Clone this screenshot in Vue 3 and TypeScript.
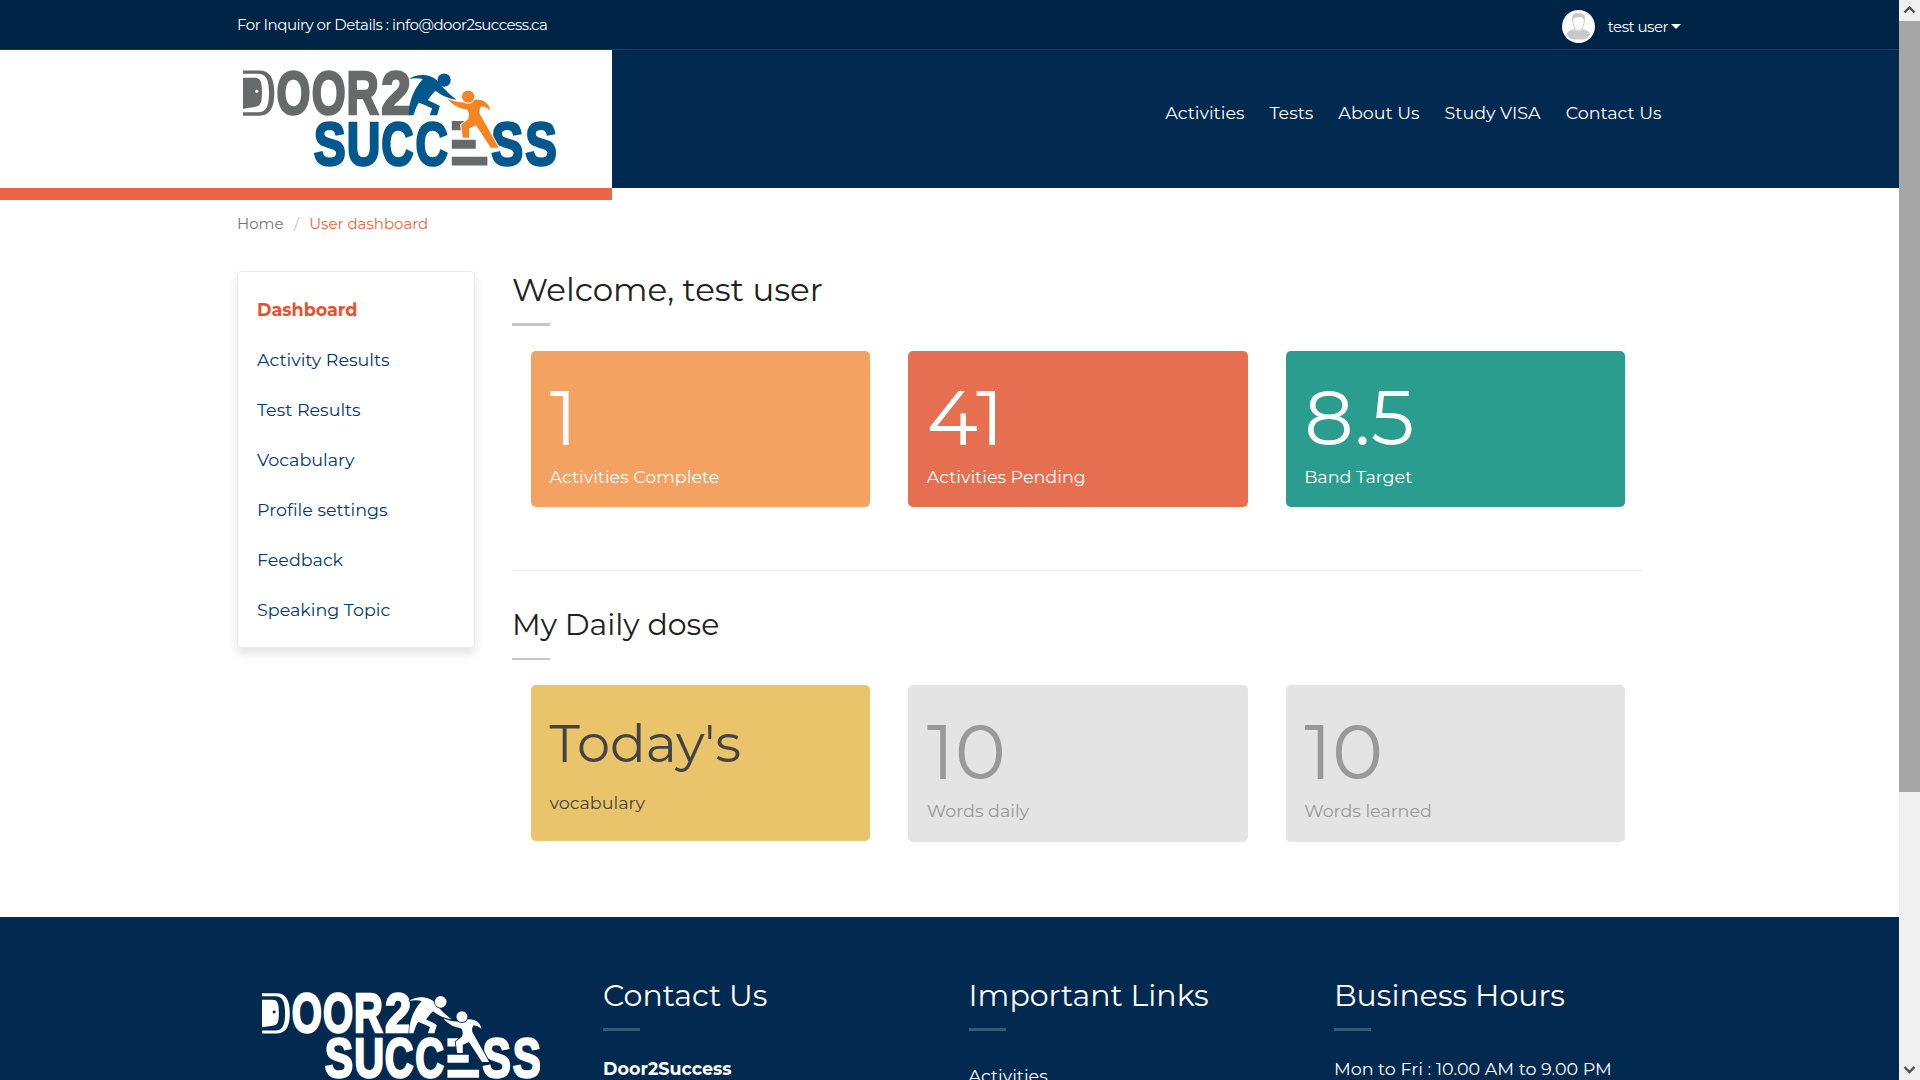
<script setup lang="ts">
import { h, type VNode } from 'vue'

interface Glyph { ch: string; left: number; right: number; base: number; tone: string }
interface Card { value: string; label: string; tone: string; word?: boolean }

const nav: string[] = ['Activities', 'Tests', 'About Us', 'Study VISA', 'Contact Us']
const menu: string[] = ['Dashboard', 'Activity Results', 'Test Results', 'Vocabulary', 'Profile settings', 'Feedback', 'Speaking Topic']
const progress: Card[] = [
  { value: '1', label: 'Activities Complete', tone: 'orange' },
  { value: '41', label: 'Activities Pending', tone: 'red' },
  { value: '8.5', label: 'Band Target', tone: 'teal' },
]
const daily: Card[] = [
  { value: "Today's", label: 'vocabulary', tone: 'yellow', word: true },
  { value: '10', label: 'Words daily', tone: 'grey' },
  { value: '10', label: 'Words learned', tone: 'grey' },
]

// Advance, left bearing and ink width per em of the bold logo letters
const metrics: Record<string, [number, number, number]> = {
  O: [0.778, 0.041, 0.695],
  R: [0.722, 0.067, 0.64],
  '2': [0.556, 0.034, 0.475],
  S: [0.667, 0.031, 0.59],
  U: [0.722, 0.06, 0.6],
  C: [0.722, 0.045, 0.64],
}
const weight = 8
const glyphs: Glyph[] = [
  { ch: 'O', left: 171, right: 270, base: 343, tone: 'steel' },
  { ch: 'O', left: 277, right: 376, base: 343, tone: 'steel' },
  { ch: 'R', left: 385, right: 479, base: 343, tone: 'steel' },
  { ch: '2', left: 486, right: 570, base: 343, tone: 'steel' },
  { ch: 'S', left: 282, right: 375, base: 495, tone: 'blue' },
  { ch: 'U', left: 385, right: 477, base: 495, tone: 'blue' },
  { ch: 'C', left: 486, right: 580, base: 495, tone: 'blue' },
  { ch: 'C', left: 589, right: 683, base: 495, tone: 'blue' },
  { ch: 'S', left: 815, right: 908, base: 495, tone: 'blue' },
  { ch: 'S', left: 917, right: 1009, base: 495, tone: 'blue' },
]

// Shared by the header and the footer; colours come from custom properties
const Logo = (): VNode =>
  h('svg', { viewBox: '69 208 940 297', style: 'display:block;width:100%;height:100%' }, [
    h('path', {
      fill: 'var(--steel)',
      d: 'M69 212H118C150 212 163 236 163 280S150 348 118 348H69V338H114C138 338 147 320 147 280S138 222 114 222H69ZM69 234H104C121 234 126 244 126 278S121 320 104 322L69 327Z',
    }),
    h('circle', { cx: 110, cy: 275, r: 5, fill: 'var(--bg)' }),
    ...glyphs.map((g) => {
      const [adv, bearing, ink] = metrics[g.ch]
      const k = (g.right - g.left - weight) / ink
      return h('text', {
        x: g.left + weight / 2 - bearing * k,
        y: g.base,
        textLength: adv * k,
        lengthAdjust: 'spacingAndGlyphs',
        'font-size': 185,
        'font-family': 'Liberation Sans, Arial, sans-serif',
        'font-weight': 700,
        fill: `var(--${g.tone})`,
        stroke: `var(--${g.tone})`,
        'stroke-width': weight,
      }, g.ch)
    }),
    h('path', { fill: 'var(--steel)', d: 'M696 364H745V392H696ZM696 420H768V447H696ZM696 471H803V498H696Z' }),
    h('g', { fill: 'var(--blue)', stroke: 'var(--bg)', 'stroke-width': 'var(--edge)', 'paint-order': 'stroke' }, [
      h('path', { d: 'M566 238C592 221 634 219 657 248C674 270 691 286 710 300C689 300 667 288 647 273C638 282 630 292 624 301C638 308 652 313 660 320L652 347H630L637 326C622 319 606 312 597 309C589 319 586 334 581 347H567C566 305 583 266 609 238C594 234 580 235 566 238Z' }),
      h('circle', { cx: 673, cy: 241, r: 20 }),
    ]),
    h('g', { fill: 'var(--orange)', stroke: 'var(--bg)', 'stroke-width': 6, 'paint-order': 'stroke' }, [
      h('path', { d: 'M683 297C703 305 718 308 737 308C750 299 772 298 786 302C801 308 810 319 811 333C802 323 792 320 783 321C777 333 779 343 784 350L837 444H813L769 377L748 386V414H729L724 376L746 357C749 345 748 337 742 330C722 327 699 318 683 297Z' }),
      h('circle', { cx: 745, cy: 291, r: 18.5 }),
    ]),
  ])
</script>

<template>
  <div class="screen">
    <div class="page">
      <div class="topbar">
        <span class="inquiry">For Inquiry or Details : info@door2success.ca</span>
        <div class="account">
          <svg class="avatar" viewBox="0 0 33 33">
            <circle cx="16.5" cy="16.5" r="16.5" fill="#fff" />
            <path fill="#c9c9c9" d="M5 25C5 21 9 20 13 19C14 22 19 22 20 19C24 20 28 21 28 25C26 28 23 29.500 21 29.500H12C10 29.500 7 28 5 25Z" />
            <path fill="#fff" stroke="#c9c9c9" d="M10.800 9C10.500 15 13 20.500 16.500 20.500S22.500 15 22.200 9C21 4 12 4 10.800 9Z" />
            <path fill="#c9c9c9" d="M10.500 11C9 4 13 2.500 17 3C22 3 24 6 22.500 11C21.500 7.500 21 7 17 7.300C13 7 11.500 7.500 10.500 11Z" />
          </svg>
          <span>test user</span>
          <i class="caret"></i>
        </div>
      </div>

      <header class="header">
        <div class="brand"><div class="brand-logo"><Logo /></div></div>
        <nav class="nav"><a v-for="n in nav" :key="n">{{ n }}</a></nav>
      </header>

      <div class="crumbs"><span>Home</span><span class="slash">/</span><span class="here">User dashboard</span></div>

      <div class="body">
        <aside class="menu">
          <a v-for="(m, i) in menu" :key="m" :class="{ active: i === 0 }">{{ m }}</a>
        </aside>
        <main class="main">
          <h1 class="title">Welcome, test user</h1>
          <div class="rule"></div>
          <div class="cards">
            <div v-for="c in progress" :key="c.label" class="card" :class="c.tone">
              <div class="value">{{ c.value }}</div>
              <div class="label">{{ c.label }}</div>
            </div>
          </div>
          <div class="divider"></div>
          <h2 class="subtitle">My Daily dose</h2>
          <div class="rule thin"></div>
          <div class="cards">
            <div v-for="c in daily" :key="c.label" class="card" :class="[c.tone, { word: c.word }]">
              <div class="value">{{ c.value }}</div>
              <div class="label">{{ c.label }}</div>
            </div>
          </div>
        </main>
      </div>

      <footer class="footer">
        <div class="foot-brand"><div class="foot-logo"><Logo /></div></div>
        <section class="col">
          <h3>Contact Us</h3>
          <div class="rule"></div>
          <p><b>Door2Success</b></p>
        </section>
        <section class="col">
          <h3>Important Links</h3>
          <div class="rule"></div>
          <p class="link">Activities</p>
        </section>
        <section class="col">
          <h3>Business Hours</h3>
          <div class="rule"></div>
          <p>Mon to Fri : 10.00 AM to 9.00 PM</p>
        </section>
      </footer>
    </div>

    <div class="scrollbar">
      <svg viewBox="0 0 21 21"><path d="M5.500 12.500L10.500 7.500L15.500 12.500" /></svg>
      <div class="thumb"></div>
      <svg class="down" viewBox="0 0 21 21"><path d="M5.500 8L10.500 13L15.500 8" /></svg>
    </div>
  </div>
</template>

<style>
html,
body {
  margin: 0;
  overflow: hidden;
}
</style>

<style scoped>
.screen {
  display: flex;
  width: 1920px;
  height: 1080px;
  overflow: hidden;
  background: #fff;
  font-family: Montserrat, Inter, sans-serif;
  font-size: 17.5px;
  line-height: 26px;
  color: #212121;
}
.page {
  width: 1899px;
  height: 1080px;
  overflow: hidden;
}
.topbar {
  display: flex;
  justify-content: space-between;
  box-sizing: border-box;
  height: 50px;
  padding: 0 218px 0 237px;
  border-bottom: 1px solid #183c61;
  background: #002446;
  color: #fff;
  font-size: 15px;
  letter-spacing: -0.5px;
  line-height: 21px;
}
.inquiry {
  padding-top: 14px;
}
.account {
  display: flex;
  align-items: center;
  height: 53px;
}
.avatar {
  width: 33px;
  height: 33px;
  margin-right: 13px;
}
.caret {
  margin-left: 3px;
  border: 5px solid transparent;
  border-top-color: #fff;
  border-bottom: 0;
}
.header {
  display: flex;
  justify-content: space-between;
  height: 138px;
  background: #022950;
}
.brand {
  box-sizing: border-box;
  width: 612px;
  height: 150px;
  padding: 19px 0 0 243px;
  border-bottom: 12px solid #eb6645;
  background: #fff;
  --steel: #676a6b;
  --blue: #00588e;
  --orange: #f58422;
  --bg: #fff;
  --edge: 0;
}
.brand-logo {
  width: 313px;
  height: 99px;
}
.nav {
  display: flex;
  gap: 25px;
  margin: 50px 237.4px 0 0;
  color: #fff;
}
.crumbs {
  display: flex;
  gap: 10.3px;
  padding: 23px 0 0 237px;
  height: 60px;
  box-sizing: border-box;
  margin-bottom: 23px;
  color: #6c757d;
  font-size: 15px;
  line-height: 25px;
}
.slash {
  color: #bfc3c8;
}
.here {
  color: #eb6645;
}
.body {
  display: flex;
  align-items: flex-start;
  height: 646px;
  padding-left: 237px;
}
.menu {
  display: flex;
  flex-direction: column;
  box-sizing: border-box;
  width: 238px;
  height: 377px;
  margin-right: 37px;
  padding: 13px 19px 12px;
  border: 1px solid #ebebeb;
  border-radius: 4px;
  box-shadow: 0 6px 10px rgba(0, 0, 0, 0.11);
  color: #003a70;
  line-height: 50px;
}
.menu .active {
  color: #e8502c;
  font-weight: 700;
}
.main {
  width: 1131px;
}
.title,
.subtitle,
.col h3 {
  margin: 0;
  font-size: 30px;
  font-weight: 400;
  line-height: 40px;
}
.title {
  margin-top: -1px;
  font-size: 32.5px;
}
.rule {
  width: 38px;
  height: 3px;
  margin: 13px 0 25px;
  background: #c6c6c6;
}
.rule.thin {
  height: 2px;
}
.cards {
  display: grid;
  grid-template-columns: repeat(3, 1fr);
  gap: 38px;
  padding: 0 18px 0 19px;
}
.card {
  box-sizing: border-box;
  height: 156px;
  padding: 28px 18.5px 0;
  border-radius: 5px;
  color: #fff;
}
.value {
  font-size: 77.3px;
  line-height: 77px;
}
.label {
  margin-top: 8px;
}
.word {
  padding-top: 20px;
}
.word .value {
  font-size: 52.8px;
}
.orange { background: #f4a261; }
.red { background: #e76f51; }
.teal { background: #2a9d8f; }
.yellow { background: #e9c46a; color: #444; }
.grey { height: 157px; background: #e4e4e4; color: #999; }
.divider {
  height: 1px;
  margin: 63px 0 34px;
  background: #ebebeb;
}
.footer {
  display: flex;
  height: 163px;
  background: #022950;
  color: #fff;
}
.foot-brand {
  width: 341px;
  padding: 75px 0 0 262px;
  --steel: #fff;
  --blue: #fff;
  --orange: #fff;
  --bg: #022950;
  --edge: 5;
}
.foot-logo {
  width: 278px;
  height: 88px;
}
.col {
  width: 365.5px;
  padding-top: 59px;
}
.col .rule {
  width: 37px;
  margin: 12px 0 25px;
  background: #395875;
}
.col p {
  margin: 0;
}
.col .link {
  padding-top: 7px;
}
.scrollbar {
  display: flex;
  flex-direction: column;
  width: 21px;
  height: 1080px;
  background: #f0f0f0;
}
.scrollbar svg {
  width: 21px;
  height: 21px;
  fill: none;
  stroke: #505050;
  stroke-width: 2.4;
}
.thumb {
  height: 771px;
  background: #a6a6a6;
}
.scrollbar .down {
  margin-top: auto;
}
</style>
